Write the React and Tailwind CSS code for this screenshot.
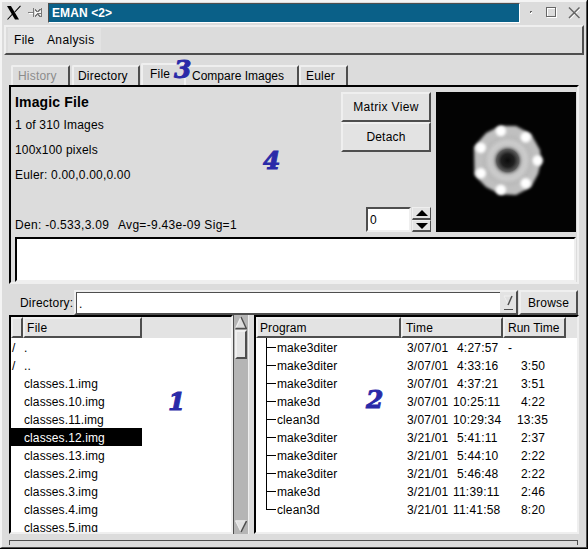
import React from "react";

const RAISED = "border-2 border-t-[#efefef] border-l-[#efefef] border-b-[#4e4e4e] border-r-[#4e4e4e] bg-[#e3e3e3]";

const FILES = [
  ["/", "."],
  ["/", ".."],
  ["", "classes.1.img"],
  ["", "classes.10.img"],
  ["", "classes.11.img"],
  ["", "classes.12.img"],
  ["", "classes.13.img"],
  ["", "classes.2.img"],
  ["", "classes.3.img"],
  ["", "classes.4.img"],
  ["", "classes.5.img"],
];

const RUNS = [
  ["make3diter", "3/07/01", "4:27:57", "-"],
  ["make3diter", "3/07/01", "4:33:16", "3:50"],
  ["make3diter", "3/07/01", "4:37:21", "3:51"],
  ["make3d", "3/07/01", "10:25:11", "4:22"],
  ["clean3d", "3/07/01", "10:29:34", "13:35"],
  ["make3diter", "3/21/01", "5:41:11", "2:37"],
  ["make3diter", "3/21/01", "5:44:10", "2:22"],
  ["make3diter", "3/21/01", "5:46:48", "2:22"],
  ["make3d", "3/21/01", "11:39:11", "2:46"],
  ["clean3d", "3/21/01", "11:41:58", "8:20"],
];

function TitleBar() {
  return (
    <div className="flex h-[22px] shrink-0 items-start pt-px">
      <svg className="ml-[5px] mt-[2px] h-4 w-[15px]" viewBox="0 0 15 16">
        <path d="M0 1h4L12 14.500H8z" fill="#000" />
        <path d="M13.500 0.800 7.800 7M5.500 9 0.500 14.500" stroke="#000" strokeWidth="1.100" fill="none" />
      </svg>
      <svg className="ml-[6px] mt-[5px] h-[11px] w-4" viewBox="0 0 16 11" shapeRendering="crispEdges">
        <path d="M0 4.500h6" stroke="#808080" />
        <path d="M1 5.500h5" stroke="#fff" />
        <path d="M7 3h1l1 1h2l3-2v6l-3-2H9L8 7H7z" fill="#f4f4f4" />
        <path d="M5.500 0v9M13.500 0v9" stroke="#777" />
        <path d="M6.500 1.500h1v1h1v1h2v-1h1v-1h2M6.500 8.500h1v-1h1v-1h2v1h1v1h2M8.500 5.500h4" stroke="#777" fill="none" />
      </svg>
      <div className="ml-1 h-5 w-[472px] border border-b-white border-l-[#4e4e4e] border-r-white border-t-[#4e4e4e] bg-[#0a6088] pl-[3px] text-[12px] font-bold leading-[19px] tracking-[0.1px] text-white">
        EMAN &lt;2&gt;
      </div>
      <svg className="ml-[9px] mt-1 h-3 w-[53px]" viewBox="0 0 53 12" shapeRendering="crispEdges">
        <path d="M1 4h2v1h-1v1h-1z" fill="#666" />
        <path d="M2 5h1v2h-2v-1h1z" fill="#fff" />
        <path d="M18.500 1.500h9v9h-9z" fill="none" stroke="#fff" />
        <path d="M17.500 0.500h9v9h-9z" fill="none" stroke="#666" />
        <path d="M40.500 1l10 10M51 1.500l-10 10" stroke="#fff" strokeWidth="1.500" shapeRendering="auto" />
        <path d="M40 0.500l10.500 10.500M50.500 0.500l-10.500 10.500" stroke="#666" strokeWidth="1.500" shapeRendering="auto" />
      </svg>
    </div>
  );
}

function MenuBar() {
  return (
    <div className="ml-[2px] mt-px flex h-[30px] w-[580px] shrink-0 border-2 border-b-[#4e4e4e] border-l-[#efefef] border-r-[#4e4e4e] border-t-[#efefef] pl-[2px] pt-px">
      <div className="flex h-6 w-[93px] bg-[#e3e3e3] pl-[6px] leading-6">
        <span className="w-[33px] tracking-[0.3px]">File</span>
        <span className="tracking-[0.35px]">Analysis</span>
      </div>
    </div>
  );
}

function Tab({ className, children }) {
  return (
    <div className={"shrink-0 rounded-tl-[2px] border-l-2 border-r-2 border-t-2 border-l-[#efefef] border-r-[#4e4e4e] border-t-[#efefef] whitespace-nowrap leading-[18px] " + className}>
      {children}
    </div>
  );
}

function Tabs() {
  return (
    <div className="ml-[9px] mt-2 flex h-[22px] items-end">
      <Tab className="h-5 w-[59px] pl-[5px] text-[#8c8c8c]">History</Tab>
      <Tab className="ml-[2px] h-5 w-[68px] pl-[4px]">Directory</Tab>
      <Tab className="ml-px h-[22px] w-[45px] pl-[7px]">File</Tab>
      <Tab className="-ml-[2px] h-5 w-[115px] border-l-0 pl-[6px]"><span className="tracking-normal">Compare Images</span></Tab>
      <Tab className="h-5 w-[49px] pl-[5px]">Euler</Tab>
    </div>
  );
}

function ParticleImage() {
  const spots = [
    [101.7, 68.5],
    [89.7, 45.3],
    [64.8, 39],
    [44.8, 55.7],
    [44.8, 81.3],
    [64.8, 97.7],
    [89.7, 91.3],
  ];
  return (
    <svg className="h-[140px] w-[140px] bg-[#030303]" viewBox="0 0 140 140">
      <defs>
        <filter id="soft" x="-20%" y="-20%" width="140%" height="140%">
          <feGaussianBlur stdDeviation="1.600" />
        </filter>
        <radialGradient id="hole">
          <stop offset="0" stopColor="#0c0c0c" />
          <stop offset="0.400" stopColor="#202020" />
          <stop offset="0.700" stopColor="#5c5c5c" />
          <stop offset="1" stopColor="#c4c4c4" stopOpacity="0" />
        </radialGradient>
      </defs>
      <path
        d="M104 58 L105 70 L102 82 L95 95 L80 103 L64 102 L50 95 L38.500 83 L38 55 L50 41 L64 34 L80 34 L95 42 Z"
        fill="#c0c0c0"
        filter="url(#soft)"
      />
      <circle cx="71.700" cy="68.500" r="24" fill="none" stroke="#b0b0b0" strokeWidth="3" opacity="0.400" filter="url(#soft)" />
      <circle cx="71.700" cy="68.500" r="18" fill="none" stroke="#d4d4d4" strokeWidth="4" opacity="0.600" filter="url(#soft)" />
      <circle cx="71.700" cy="68.500" r="16" fill="url(#hole)" />
      <g fill="#fff" filter="url(#soft)">
        {spots.map(([x, y]) => (
          <circle key={x + "-" + y} cx={x} cy={y} r="5.200" />
        ))}
      </g>
    </svg>
  );
}

function FilePanel() {
  return (
    <div className="ml-[7px] h-[199px] w-[570px] shrink-0 border-2 border-b-[#efefef] border-l-black border-r-[#efefef] border-t-black pl-[4px] pt-[5px]">
      <div className="flex h-[140px]">
        <div className="w-[326px] whitespace-pre">
          <div className="h-[20px] text-[14px] font-bold leading-[21px] tracking-[0.15px]">Imagic File</div>
          <div className="h-[25px] leading-[27px]">1 of 310 Images</div>
          <div className="h-[25px] leading-[27px]">100x100 pixels</div>
          <div className="h-[50px] leading-[27px]">Euler: 0.00,0.00,0.00</div>
          <div className="flex leading-[27px]">
            <span className="w-[103px] tracking-[0.3px]">Den: -0.533,3.09  </span>
            <span className="tracking-[0.3px]">Avg=-9.43e-09 Sig=1</span>
          </div>
        </div>
        <div className="flex w-[95px] flex-col">
          <div className={RAISED + " h-[30px] w-[90px] text-center leading-[27px] tracking-[0.35px]"}>Matrix View</div>
          <div className={RAISED + " h-[30px] w-[90px] text-center leading-[27px]"}>Detach</div>
          <div className="ml-[25px] mt-[55px] flex h-[25px] w-[65px]">
            <div className="h-[25px] w-[45px] border-2 border-b-[#efefef] border-l-[#4e4e4e] border-r-[#efefef] border-t-[#4e4e4e] bg-white pl-[2px] leading-[22px]">0</div>
            <div className="ml-px flex w-[19px] flex-col">
              {[0, 1].map((i) => (
                <div key={i} className={"flex items-center justify-center border-b-2 border-l border-r border-t border-b-[#4e4e4e] border-l-[#efefef] border-r-[#4e4e4e] border-t-[#efefef] bg-[#e3e3e3] " + (i ? "h-[12px]" : "h-[13px]")}>
                  <svg className="h-[6px] w-3" viewBox="0 0 12 6">
                    <path d={i ? "M0 0h12L6 6z" : "M0 6h12L6 0z"} fill="#000" />
                  </svg>
                </div>
              ))}
            </div>
          </div>
        </div>
        <ParticleImage />
      </div>
      <div className="mt-[5px] h-[45px] w-[561px] border-2 border-b-[#efefef] border-l-black border-r-[#efefef] border-t-black bg-white" />
    </div>
  );
}

function DirectoryRow() {
  return (
    <div className="mt-[6px] flex h-[25px] shrink-0">
      <span className="ml-[18px] w-[54px] leading-[27px]">Directory:</span>
      <div className={RAISED + " flex h-[25px] w-[444px]"}>
        <div className="h-[21px] w-[424px] border-l border-t border-[#4e4e4e] bg-white pl-[2px] leading-[23px]">.</div>
        <svg className="ml-[3px] mt-[2px] h-[17px] w-[11px]" viewBox="0 0 11 17">
          <path d="M1 2h8L5 10z" fill="#e0e0e0" stroke="#efefef" />
          <path d="M9 2 5 11" stroke="#4e4e4e" strokeWidth="1.500" />
          <path d="M1 15.500h9" stroke="#4e4e4e" />
        </svg>
      </div>
      <div className={RAISED + " ml-px h-[25px] w-[59px] text-center leading-[23px]"}>Browse</div>
    </div>
  );
}

function HeaderCell({ className, children }) {
  return <div className={RAISED + " h-[21px] shrink-0 whitespace-nowrap leading-[19px] " + className}>{children}</div>;
}

function FileList() {
  return (
    <div className="flex h-[220px] w-[240px]">
      <div className="h-[219px] w-[224px] overflow-hidden border-2 border-b-[#efefef] border-l-black border-r-[#efefef] border-t-black bg-white">
        <div className="flex h-[21px] bg-[#e3e3e3]">
          <HeaderCell className="w-3" />
          <HeaderCell className="w-[119px] pl-[2px]"><span className="tracking-[0.3px]">File</span></HeaderCell>
        </div>
        {FILES.map(([mark, name]) => (
          <div key={name} className={"flex h-[18px] w-[131px] leading-[20px] " + (name === "classes.12.img" ? "bg-black text-white" : "")}>
            <span className="w-[13px] pl-px">{mark}</span>
            <span className="tracking-[0.1px]">{name}</span>
          </div>
        ))}
      </div>
      <div className="flex h-[219px] w-4 flex-col items-center border-l border-r border-l-[#4e4e4e] border-r-[#efefef] bg-[#b5b5b5]">
        <svg className="mt-px h-[14px] w-3 shrink-0" viewBox="0 0 12 14">
          <path d="M6 1 11.500 12.500H0.500z" fill="#dcdcdc" />
          <path d="M6 1 0.800 12" stroke="#efefef" strokeWidth="1.300" />
          <path d="M6 1 11.300 12.500H0.500" stroke="#4e4e4e" strokeWidth="1.400" fill="none" />
        </svg>
        <div className={RAISED + " h-[29px] w-3 shrink-0"} />
        <svg className="mb-[1px] mt-auto h-[13px] w-3 shrink-0" viewBox="0 0 12 13">
          <path d="M0.500 0.800h11L6 12z" fill="#e0e0e0" />
          <path d="M6 12 0.500 0.800h11" stroke="#efefef" fill="none" />
          <path d="M11.500 1 6 12" stroke="#4e4e4e" strokeWidth="1.500" />
        </svg>
      </div>
    </div>
  );
}

function RunList() {
  return (
    <div className="ml-[5px] h-[219px] w-[325px] overflow-hidden border-2 border-b-[#efefef] border-l-black border-r-[#efefef] border-t-black bg-white">
      <div className="flex h-[21px] bg-[#e3e3e3]">
        <HeaderCell className="w-[145px] pl-[2px]"><span className="tracking-[0.1px]">Program</span></HeaderCell>
        <HeaderCell className="w-[102px] pl-[3px]">Time</HeaderCell>
        <HeaderCell className="w-[63px] pl-[3px]"><span className="tracking-normal">Run Time</span></HeaderCell>
      </div>
      {RUNS.map(([program, date, time, run], i) => (
        <div key={date + time} className="flex h-[18px] leading-[20px]">
          <div className={"ml-[10px] w-px bg-black " + (i === RUNS.length - 1 ? "h-[10px]" : "h-[18px]")} />
          <div className="mt-[9px] h-px w-[9px] bg-black" />
          <span className="ml-px w-[130px] tracking-[0.1px]">{program}</span>
          <span className="w-[46px]">{date}</span>
          <span className={time.length > 7 ? "w-[63px]" : "w-[59px] ml-1"}>{time}</span>
          <span className={run === "-" ? "-ml-[8px]" : run.length > 4 ? "ml-px" : "ml-[5px]"}>{run}</span>
        </div>
      ))}
    </div>
  );
}

function Mark({ className, children }) {
  return (
    <span className={"absolute font-['DejaVu_Serif'] text-[25px] font-bold italic leading-[30px] tracking-normal text-[#2a2aa8] [-webkit-text-stroke:0.9px_#2a2aa8] " + className}>
      {children}
    </span>
  );
}

export default function App() {
  return (
    <div className="relative flex h-[549px] w-[588px] flex-col overflow-hidden border-b border-r border-black bg-[#dcdcdc] font-['Liberation_Sans',sans-serif] text-[12px] tracking-[0.2px] text-black">
      <div className="flex h-[548px] w-[587px] flex-col border-b border-l-2 border-r border-t-2 border-b-[#4e4e4e] border-l-[#f4f4f4] border-r-[#4e4e4e] border-t-[#f4f4f4]">
        <TitleBar />
        <MenuBar />
        <Tabs />
        <FilePanel />
        <DirectoryRow />
        <div className="ml-[7px] flex h-[220px] shrink-0">
          <FileList />
          <RunList />
        </div>
        <div className="ml-[7px] mt-[5px] h-[5px] w-[569px] shrink-0 border-l border-r border-t border-[#4e4e4e]" />
      </div>
      <Mark className="left-[174px] top-[55px]">3</Mark>
      <Mark className="left-[263px] top-[146px]">4</Mark>
      <Mark className="left-[168px] top-[387px]">1</Mark>
      <Mark className="left-[366px] top-[385px]">2</Mark>
    </div>
  );
}
